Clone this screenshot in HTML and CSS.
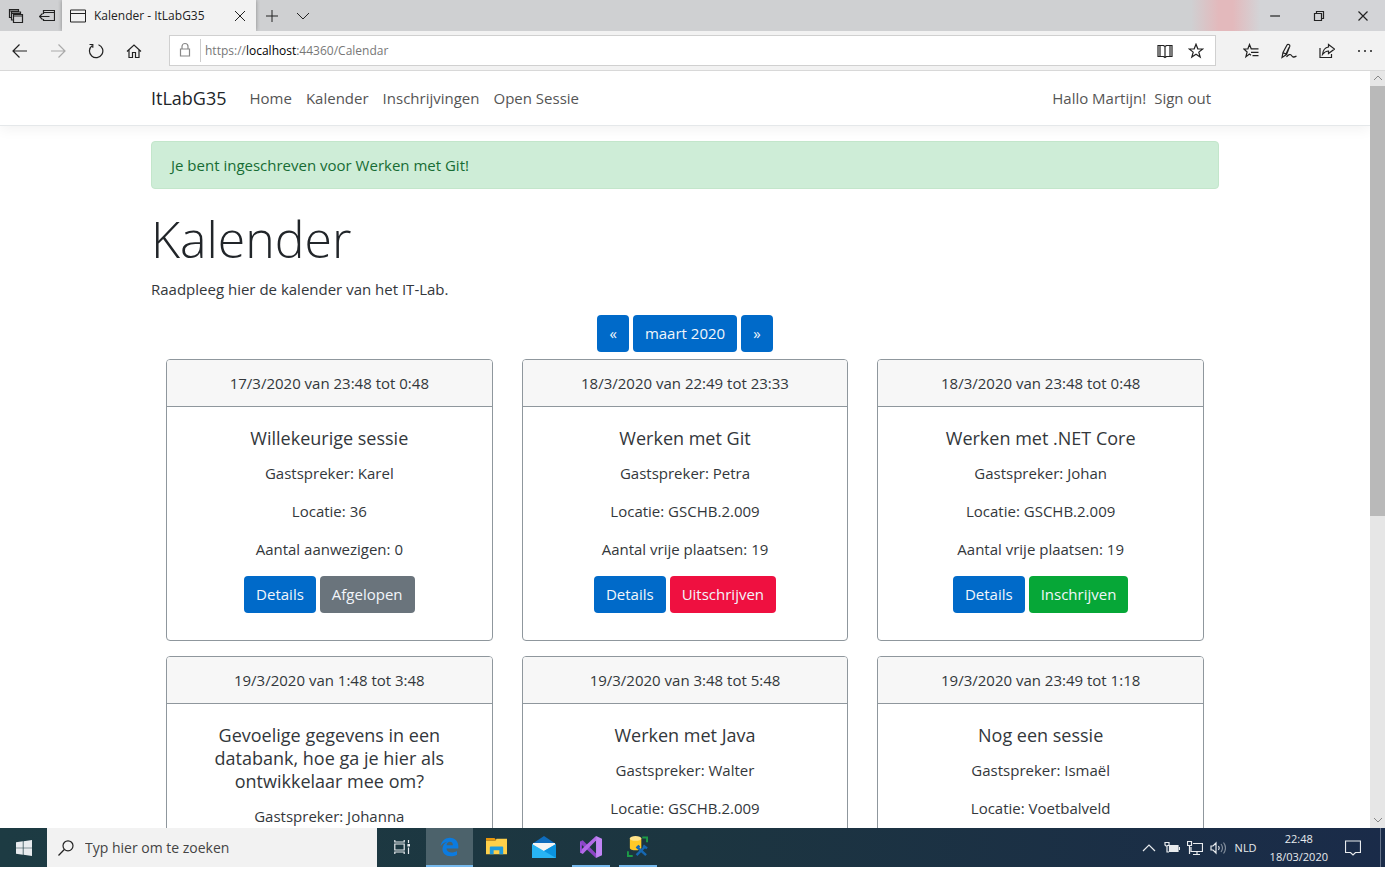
FILE: index.html
```html
<!DOCTYPE html>
<html lang="nl">
<head>
<meta charset="utf-8">
<title>Kalender - ItLabG35</title>
<link rel="stylesheet" href="styles.css">
</head>
<body>
<div class="desktop">
  <div class="titlebar">
    <button class="tool" aria-label="Tabbladen"><svg class="ico" viewBox="0 0 16 16"><path d="M3.500 9.500h-2v-8h9v2M1.500 3h9M5.500 12h-2V4h9v2M3.500 5.500h9"/><path d="M5.500 6.500h9v8h-9zM5.500 8h9"/></svg></button>
    <button class="tool" aria-label="Tabbladen opzij zetten"><svg class="ico" viewBox="0 0 16 16"><path d="M4.500 6V2.500h11v10h-11V11M4.500 4.500h11M.5 8.500h10M3.500 5.500l-3 3 3 3"/></svg></button>
    <div class="tab">
      <svg class="ico thin" viewBox="0 0 16 16"><path d="M.5 2h15v12H.5zM.5 5.500h15"/></svg>
      <span class="tab-title">Kalender - ItLabG35</span>
      <button class="close" aria-label="Tabblad sluiten"><svg class="ico thin" viewBox="0 0 16 16"><path d="M3 3l10 10M13 3L3 13"/></svg></button>
    </div>
    <button class="tool" aria-label="Nieuw tabblad"><svg class="ico thin" viewBox="0 0 16 16"><path d="M8 2v12M2 8h12"/></svg></button>
    <button class="tool" aria-label="Tabbladvoorbeelden"><svg class="ico thin" viewBox="0 0 16 16"><path d="M2 5l6 6 6-6"/></svg></button>
    <div class="window-controls">
      <button class="win" aria-label="Minimaliseren"><svg class="ico" viewBox="0 0 16 16"><path d="M3 8h10"/></svg></button>
      <button class="win" aria-label="Verkleinen"><svg class="ico" viewBox="0 0 16 16"><path d="M3.500 5.500h7v7h-7zM5.500 5V3.500h7v7H11"/></svg></button>
      <button class="win" aria-label="Sluiten"><svg class="ico" viewBox="0 0 16 16"><path d="M3.500 3.500l9 9M12.500 3.500l-9 9"/></svg></button>
    </div>
  </div>

  <div class="toolbar">
    <div class="nav-tools">
      <button class="nav-btn" aria-label="Terug"><svg class="ico" viewBox="0 0 16 16"><path d="M15 8H1M7.500 1.500L1 8l6.500 6.500"/></svg></button>
      <button class="nav-btn dim" aria-label="Vooruit"><svg class="ico" viewBox="0 0 16 16"><path d="M1 8h14M8.500 1.500L15 8l-6.500 6.500"/></svg></button>
      <button class="nav-btn" aria-label="Vernieuwen"><svg class="ico" viewBox="0 0 16 16"><path d="M10.500 1.700A6.700 6.700 0 1 1 4 2.700M1.500 1.500h3.300v3.300"/></svg></button>
      <button class="nav-btn" aria-label="Startpagina"><svg class="ico" viewBox="0 0 16 16"><path d="M1 8.500l7-6.500 7 6.500M3 7v7.500h3.500V9.500h3v5H13V7"/></svg></button>
    </div>
    <div class="address">
      <svg class="ico lock" viewBox="0 0 16 16"><path d="M3.500 7h9v7h-9zM5 7V4.500a3 3 0 0 1 6 0V7"/></svg>
      <a class="url" href="#">https://<strong>localhost</strong>:44360/Calendar</a>
      <button class="tool" aria-label="Leesweergave"><svg class="ico" viewBox="0 0 16 16"><path d="M1 2.500h5.500L8 3.500l1.500-1H15v11H9.500l-1.500 1-1.500-1H1zM8 3.500v11M3 2.500v11M13 2.500v11"/></svg></button>
      <button class="tool" aria-label="Favoriet"><svg class="ico" viewBox="0 0 16 16"><path d="M8 1.200l1.800 4.600 4.900.2-3.900 3.100 1.400 4.900L8 11.200 3.800 14l1.400-4.900L1.300 6l4.900-.2z"/></svg></button>
    </div>
    <div class="actions">
      <button class="tool" aria-label="Hub"><svg class="ico" viewBox="0 0 16 16"><path d="M15.500 5.800H8.200L6.500 1.500 4.900 5.800.8 6l3.300 3-1.200 4.700 3.600-2.600 1.500 1.200M8 9.300h7.500M9.500 12.700h6"/></svg></button>
      <button class="tool" aria-label="Notities"><svg class="ico" viewBox="0 0 16 16"><path d="M1 14.500L2 9.500 6 2c.8-1.400 3.300-.3 2.800 1.200L5.500 11.500zM2 9.500l3.500 2M8 4.500L5 11M5.500 14c2-3 4-3 5-1.500s2 2.500 5 .5"/></svg></button>
      <button class="tool" aria-label="Delen"><svg class="ico" viewBox="0 0 16 16"><path d="M1 5v9.500h11.500V11M9.500 1.500l6 4.500-6 4.500V8C7 8 5.500 9 3.500 11.500 4 7 6 4.500 9.500 4z"/></svg></button>
      <button class="tool" aria-label="Meer"><svg class="ico solid" viewBox="0 0 16 16"><circle cx="2" cy="8" r="1"/><circle cx="8" cy="8" r="1"/><circle cx="14" cy="8" r="1"/></svg></button>
    </div>
  </div>

  <div class="viewport">
    <div class="page">
      <header class="navbar">
        <nav class="container nav-inner">
          <a class="brand" href="#">ItLabG35</a>
          <a href="#">Home</a>
          <a href="#">Kalender</a>
          <a href="#">Inschrijvingen</a>
          <a href="#">Open Sessie</a>
          <span class="user"><a href="#">Hallo Martijn!</a><a href="#">Sign out</a></span>
        </nav>
      </header>
      <main class="container">
        <div class="alert" role="alert">Je bent ingeschreven voor Werken met Git!</div>
        <h1>Kalender</h1>
        <p class="lead">Raadpleeg hier de kalender van het IT-Lab.</p>
        <div class="buttons">
          <button class="btn">«</button>
          <button class="btn">maart 2020</button>
          <button class="btn">»</button>
        </div>
        <div class="cards">
          <article class="card">
            <div class="card-head">17/3/2020 van 23:48 tot 0:48</div>
            <div class="card-body">
              <h2>Willekeurige sessie</h2>
              <p>Gastspreker: Karel</p>
              <p>Locatie: 36</p>
              <p>Aantal aanwezigen: 0</p>
              <div class="buttons"><button class="btn">Details</button><button class="btn gray">Afgelopen</button></div>
            </div>
          </article>
          <article class="card">
            <div class="card-head">18/3/2020 van 22:49 tot 23:33</div>
            <div class="card-body">
              <h2>Werken met Git</h2>
              <p>Gastspreker: Petra</p>
              <p>Locatie: GSCHB.2.009</p>
              <p>Aantal vrije plaatsen: 19</p>
              <div class="buttons"><button class="btn">Details</button><button class="btn red">Uitschrijven</button></div>
            </div>
          </article>
          <article class="card">
            <div class="card-head">18/3/2020 van 23:48 tot 0:48</div>
            <div class="card-body">
              <h2>Werken met .NET Core</h2>
              <p>Gastspreker: Johan</p>
              <p>Locatie: GSCHB.2.009</p>
              <p>Aantal vrije plaatsen: 19</p>
              <div class="buttons"><button class="btn">Details</button><button class="btn green">Inschrijven</button></div>
            </div>
          </article>
          <article class="card">
            <div class="card-head">19/3/2020 van 1:48 tot 3:48</div>
            <div class="card-body">
              <h2>Gevoelige gegevens in een databank, hoe ga je hier als ontwikkelaar mee om?</h2>
              <p>Gastspreker: Johanna</p>
            </div>
          </article>
          <article class="card">
            <div class="card-head">19/3/2020 van 3:48 tot 5:48</div>
            <div class="card-body">
              <h2>Werken met Java</h2>
              <p>Gastspreker: Walter</p>
              <p>Locatie: GSCHB.2.009</p>
            </div>
          </article>
          <article class="card">
            <div class="card-head">19/3/2020 van 23:49 tot 1:18</div>
            <div class="card-body">
              <h2>Nog een sessie</h2>
              <p>Gastspreker: Ismaël</p>
              <p>Locatie: Voetbalveld</p>
            </div>
          </article>
        </div>
      </main>
    </div>
    <div class="scrollbar">
      <svg class="arrow" viewBox="0 0 15 15"><path d="M4 9l4-4 4 4"/></svg>
      <div class="thumb"></div>
      <div class="track"></div>
      <svg class="arrow" viewBox="0 0 15 15"><path d="M4 5l4 4 4-4"/></svg>
    </div>
  </div>

  <footer class="taskbar">
    <button class="start" aria-label="Start"><svg class="ico solid" viewBox="0 0 16 16"><path d="M0 2.200L6.800 1.300V7.700H0zM7.500 1.200L16 0v7.700H7.500zM0 8.300h6.800v6.400L0 13.800zM7.500 8.300H16V16l-8.500-1.200z"/></svg></button>
    <label class="search">
      <svg class="ico" viewBox="0 0 16 16"><circle cx="10" cy="5.800" r="5"/><path d="M6.300 9.500L.5 15.500"/></svg>
      <input type="text" placeholder="Typ hier om te zoeken" aria-label="Zoeken">
    </label>
    <button class="task view" aria-label="Taakweergave"><svg class="ico" viewBox="0 0 16 16"><path d="M.8 1v2h9.400V1M.8 15v-2h9.400v2M.8 5h9.400v6H.8zM14.500 1v3M14.500 8.500V15"/><path fill="currentColor" d="M14 5.500h1.500V7H14z"/></svg></button>
    <button class="task active" aria-label="Edge"><svg class="edge" viewBox="0 0 20 20"><path fill="#0b7be0" d="M.6 9.200C1.500 3.500 5.500.3 10.400.3c5.500 0 8.900 3.800 8.900 9v2.200H6.800c.2 3 2.600 4.200 5.400 4.200 2.300 0 4-.6 5.700-1.600v4c-1.900 1.200-4.300 1.700-6.700 1.700-5.200 0-8.600-3-8.600-7.600 0-3.500 2-6.200 5-7.600C4 5.400 1.800 7 .6 9.200zM6.900 8.100h6.700c0-2.200-1.100-3.600-3.200-3.600-1.900 0-3.200 1.500-3.500 3.600z"/></svg></button>
    <button class="task" aria-label="Verkenner"><svg viewBox="0 0 22 20"><path fill="#e8960c" d="M0 1h9l2 3H0z"/><path fill="#ffd04a" d="M11 2h11v16H0V4h10z"/><path fill="#1f9bde" d="M4 18v-7q0-1 1-1h12q1 0 1 1v7h-4v-4H8v4z"/></svg></button>
    <button class="task" aria-label="Mail"><svg class="mail" viewBox="0 0 24 22"><path fill="#0f6cbd" d="M0 8L12 0l12 8v4H0z"/><path fill="#f4f4f4" d="M1 7h22v3l-11 6L1 9z"/><path fill="#28b4f4" d="M0 8l12 7 12-7v14H0z"/><path fill="#0b93e0" d="M24 8v14L12 15z"/></svg></button>
    <button class="task open" aria-label="Visual Studio"><svg class="mail" viewBox="0 0 24 24"><path fill="#8b45c6" d="M0 6l3-1.500L17.500 19v5L0 8z"/><path fill="#b36ae8" d="M0 18l3 1.500L17.500 5V0L0 16z"/><path fill="#9a4cda" d="M0 6l2 2v8l-2 2z"/><path fill="#c184f5" d="M17.500 0L24 3v18l-6.500 3z"/></svg></button>
    <button class="task open" aria-label="Databasebeheer"><svg viewBox="0 0 22 22"><path fill="#ffc928" d="M3 2.500v10c0 3.400 12 3.400 12 0v-10z"/><ellipse cx="9" cy="2.600" rx="6" ry="2.500" fill="#ffe38a"/><path fill="none" stroke="#1d9b47" stroke-width="2" d="M16 1.500h5v5M1 16v5h5"/><path fill="none" stroke="#1668b3" stroke-width="2.500" d="M10 11l10 9M19 11l-9 9M17 10l4 3M10 13l3-3"/></svg></button>
    <div class="tray">
      <svg class="ico" viewBox="0 0 16 16"><path d="M2 11l6-6 6 6"/></svg>
      <svg class="ico" viewBox="0 0 16 16"><path d="M1 2.500h4v3H3.500L3 6H2L1 5zM3 6v6h2"/><path fill="currentColor" d="M5.500 5.500h8.500v6H5.500z"/><path d="M15.500 7v3"/></svg>
      <svg class="ico" viewBox="0 0 16 16"><path d="M6 3.500h9.500v8H4V7M10 12v2.500M6 14.500h7M.5 1.500h4v4h-4zM2.500 6v8"/></svg>
      <svg class="ico" viewBox="0 0 16 16"><path d="M1 6h2l3-3v10l-3-3H1zM8.500 6q1.500 2 0 4"/><path class="faint" d="M11 4q3 4 0 8M13.500 2.500q4 5.500 0 11"/></svg>
      <span class="lang">NLD</span>
      <span class="clock">22:48<br>18/03/2020</span>
      <svg class="ico" viewBox="0 0 16 16"><path d="M.5 1h15v11.500h-5L8 15l-2.500-2.500h-5z"/></svg>
    </div>
  </footer>
</div>
</body>
</html>
```

FILE: styles.css
```css
* { box-sizing: border-box; }
body {
  margin: 0;
  font: 15px/23px "Open Sans", "Noto Sans", sans-serif;
  color: #33373b;
  background: #fff;
}
button {
  border: 0;
  padding: 0;
  background: none;
  font: inherit;
  color: inherit;
}
a { color: inherit; text-decoration: none; }
h1, h2, p { margin: 0; }
svg { display: block; flex: none; }
.ico {
  width: 16px;
  height: 16px;
  fill: none;
  stroke: currentColor;
  stroke-width: 1.2;
}
.ico.solid { fill: currentColor; stroke: none; }
.ico.thin { stroke-width: 1; }

.desktop {
  display: flex;
  flex-direction: column;
  height: 100vh;
  padding: 0 5px 3px 0;
  overflow: hidden;
}

/* Browser title bar */
.titlebar {
  display: flex;
  flex: none;
  height: 31px;
  color: #222;
  background: linear-gradient(90deg, #cfd0d2 0 86%, #e3b9bc 88% 89%, #d3d4d7 91%);
}
.tool {
  display: flex;
  align-items: center;
  justify-content: center;
  width: 31px;
}
.tab {
  display: flex;
  align-items: center;
  gap: 8px;
  width: 194px;
  padding: 0 8px;
  background: #f2f2f2;
  box-shadow: 0 0 4px #888;
  clip-path: inset(0 -4px);
}
.tab-title { flex: 1; font-size: 12px; white-space: nowrap; }
.window-controls { display: flex; margin-left: auto; }
.win { display: flex; align-items: center; justify-content: center; width: 44px; }

/* Address bar */
.toolbar {
  display: flex;
  flex: none;
  height: 40px;
  align-items: center;
  background: #f2f2f2;
  border-bottom: 1px solid #d8d8d8;
  color: #222;
}
.nav-tools { display: flex; width: 169px; padding-left: 1px; }
.nav-btn { display: flex; justify-content: center; width: 38px; }
.dim { color: #aaa; }
.address {
  display: flex;
  flex: 1;
  height: 31px;
  align-items: stretch;
  border: 1px solid #d0d0d0;
  background: #fff;
}
.lock { margin: 6px 7px; color: #888; }
.url {
  flex: 1;
  margin: 3px 0;
  padding-left: 4px;
  border-left: 1px solid #ccc;
  font-size: 12px;
  color: #777;
}
.url strong { font-weight: 400; color: #000; }
.address .tool:last-child { margin-right: 4px; }
.actions { display: flex; gap: 7px; margin-left: 19px; margin-right: 5px; }

/* Web page */
.viewport { display: flex; flex: 1; min-height: 0; }
.page { flex: 1; overflow: hidden; }
.container { max-width: 1098px; margin: 0 auto; padding: 0 15px; }
.navbar {
  border-bottom: 1px solid #e5e8ea;
  box-shadow: 0 4px 12px rgba(0, 0, 0, .05);
  color: #555;
}
.nav-inner { display: flex; align-items: center; gap: 14px; height: 54px; }
.brand { margin-right: 9px; font-size: 18px; color: #212529; }
.user { display: flex; gap: 8px; margin-left: auto; padding-right: 8px; }
.alert {
  margin-top: 15px;
  padding: 12px 19px;
  border: 1px solid #c3e6cb;
  border-radius: 4px;
  line-height: 22px;
  color: #176c34;
  background: #ceedd7;
}
h1 { margin: 19px 0 8px; font-size: 50px; font-weight: 300; line-height: 62px; color: #212529; }
.lead { margin-bottom: 14px; }
.buttons { display: flex; justify-content: center; gap: 4px; }
.btn {
  height: 37px;
  padding: 0 12px;
  border-radius: 4px;
  color: #f2f6fb;
  background: #006ac9;
}
.gray { background: #6a747c; }
.red { background: #ef1040; }
.green { background: #06a737; }
.cards {
  display: grid;
  grid-template-columns: repeat(3, 1fr);
  gap: 15px 29px;
  padding: 7px 15px;
}
.card { border: 1px solid #8f979d; border-radius: 4px; text-align: center; }
.card-head {
  padding: 12px 19px 11px;
  border-bottom: 1px solid #8f979d;
  border-radius: 3px 3px 0 0;
  background: #f7f7f7;
}
.card-body { padding: 20px 19px 27px; }
.card h2 { margin-bottom: 12px; font-size: 18px; font-weight: 400; line-height: 23px; }
.card p { margin-bottom: 15px; }

.scrollbar { display: flex; flex-direction: column; width: 15px; background: #e6e6e6; }
.arrow { width: 15px; height: 15px; fill: none; stroke: #888; }
.thumb { flex: 430; background: #b9b9b9; }
.track { flex: 297; }

/* Taskbar */
.taskbar {
  display: flex;
  flex: none;
  height: 39px;
  color: #e8ebee;
  background: linear-gradient(90deg, #1d3b43, #1c3540 50%, #1a2b49);
}
.start { display: flex; align-items: center; justify-content: center; width: 47px; }
.search {
  display: flex;
  align-items: center;
  gap: 11px;
  width: 330px;
  padding-left: 11px;
  background: #f2f2f2;
  color: #222;
}
.search input {
  flex: 1;
  min-width: 0;
  padding: 0;
  border: 0;
  background: none;
  font: 14px "Open Sans", sans-serif;
}
.search input::placeholder { color: #444; }
.task { display: flex; align-items: center; justify-content: center; width: 47px; border-bottom: 2px solid transparent; }
.task svg { width: 21px; height: 21px; }
.task svg.edge { width: 19px; height: 20px; }
.task svg.mail { width: 24px; height: 22px; }
.task.view { width: 49px; }
.task.view svg { width: 16px; height: 16px; }
.active { background: #4c626b; border-color: #76b9ed; }
.open { background: linear-gradient(#76b9ed, #76b9ed) bottom / 38px 2px no-repeat border-box; }
.tray {
  display: flex;
  align-items: center;
  gap: 7px;
  margin-left: auto;
  margin-right: 4px;
  padding-right: 19px;
  border-right: 1px solid #66738a;
  font-size: 11px;
}
.lang { margin: 0 2px; }
.clock { margin: 0 10px 0 4px; line-height: 18px; text-align: center; }
.faint { opacity: .5; }
```
